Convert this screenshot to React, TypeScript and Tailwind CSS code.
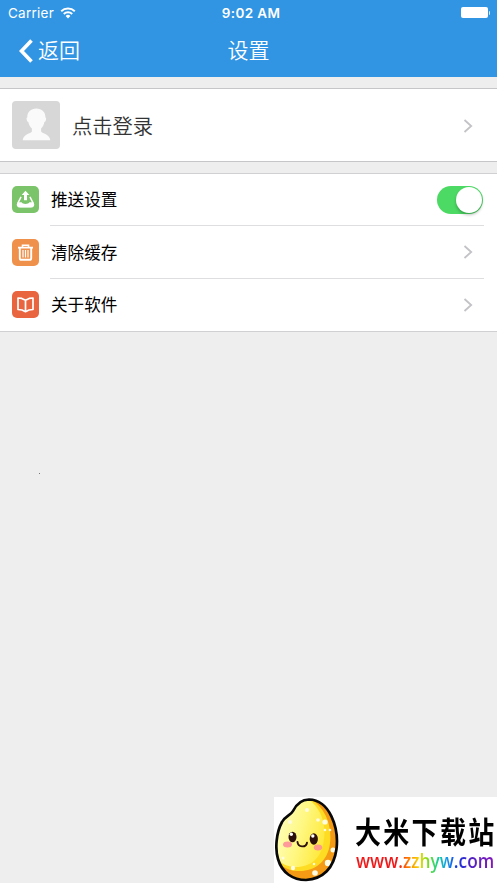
import { useState } from "react";

function WifiIcon() {
  return (
    <svg viewBox="0 0 16 12" className="mb-px ml-1.5 h-3 w-4" fill="none" stroke="white" strokeWidth="1.9">
      <path d="M1.2 4.2a9.8 9.8 0 0 1 13.6 0" />
      <path d="M3.8 7a6 6 0 0 1 8.4 0" />
      <path d="M8 11.4 5.6 9a3.4 3.4 0 0 1 4.8 0z" fill="white" stroke="none" />
    </svg>
  );
}

function Chevron() {
  return (
    <svg viewBox="0 0 10 14" className="mr-6 h-3.5 w-2.5" fill="none" stroke="#c3c3c7" strokeWidth="1.8">
      <path d="m1.5 1 6.7 6-6.7 6" />
    </svg>
  );
}

function PushIcon() {
  return (
    <svg viewBox="0 0 27 27" className="size-[27px] rounded-[5px] bg-[#7cc46a]">
      <path d="M13.5 4.8 9.7 9H12v5.200h3V9h2.300z" fill="white" />
      <path
        d="M8.800 11.300 6 16.800c-1.200 2.300-.2 4 1.800 4h11.400c2 0 3-1.700 1.800-4l-2.800-5.500"
        fill="none"
        stroke="white"
        strokeWidth="1.500"
        strokeLinecap="round"
      />
      <path d="M5.800 16.300h3.800c.8 2.200 7 2.200 7.800 0h3.800c1 2.500.1 4.900-2.200 4.900H8c-2.300 0-3.200-2.400-2.200-4.900z" fill="white" />
    </svg>
  );
}

function TrashIcon() {
  return (
    <svg viewBox="0 0 27 27" className="size-[27px] rounded-[5px] bg-[#f0914b]" fill="none" stroke="white">
      <path d="M6 8.600h15" strokeWidth="1.800" />
      <path d="M10.500 8.200V6.300h6v1.900" strokeWidth="1.600" />
      <path d="M7.800 9v10.200c0 1 .6 1.600 1.600 1.600h8.200c1 0 1.600-.6 1.600-1.600V9" strokeWidth="1.900" />
      <path d="M11 11v7.500M13.500 11v7.500M16 11v7.500" strokeWidth="1.200" />
    </svg>
  );
}

function BookIcon() {
  return (
    <svg
      viewBox="0 0 27 27"
      className="size-[27px] rounded-[5px] bg-[#e96540]"
      fill="none"
      stroke="white"
      strokeWidth="1.700"
      strokeLinejoin="round"
    >
      <path d="M13.500 9.300 9.800 7.400 6 7v11.500l4 .5 3.500 1.700L17 19l4-.5V7l-3.800.4-3.700 1.900V20" />
    </svg>
  );
}

function Avatar() {
  return (
    <svg viewBox="0 0 48 48" className="ml-3 size-12 rounded-sm bg-[#d7d7d7]">
      <path
        d="M24.300 7.500c-5.500 0-9.200 3.600-9 9-.9.200-.9 1-.5 2.500.3 1.200.8 1.900 1.500 2 .6 3 1.900 5 3.600 6.400v3.200c-1.300 2.200-8.300 2.500-9.200 8.600h27.600c-.9-6.100-7.900-6.400-9.200-8.600v-3.200c1.600-1.400 2.800-3.400 3.300-6.400.8-.1 1.200-.8 1.500-2 .4-1.500.3-2.300-.5-2.500.2-5.400-3.600-9-9.100-9z"
        fill="#fafafa"
      />
    </svg>
  );
}

function RiceMascot() {
  return (
    <svg viewBox="0 0 64 86" className="h-[86px] w-16 shrink-0">
      <defs>
        <linearGradient id="grain" x1="0" y1="0.300" x2="1" y2="0.700">
          <stop offset="0" stopColor="#ffffc4" />
          <stop offset="0.500" stopColor="#fff884" />
          <stop offset="1" stopColor="#ffe838" />
        </linearGradient>
        <clipPath id="grain-shape">
          <path d="M34 2.500C26 2.500 21 8 18 14c-2 4-8 5-11 11C1 36 0 52 3 62c4 14 15 21 28 21 17-1 28-12 30.500-31C64 31 55 3 34 2.500z" />
        </clipPath>
      </defs>
      <g clipPath="url(#grain-shape)">
        <path d="M0 0h64v86H0z" fill="#f59a14" />
        <path d="M36 2C51 12 57 29 55 46c-2 19-16 29-33 28C12 73 6 69 0 62V0z" fill="#ffdc24" />
        <path d="M33 2c13 9 18 24 16 40-2 19-13 28-28 28C11 70 5 66 0 59V0z" fill="url(#grain)" />
        <g fill="#fffbe3">
          <circle cx="50" cy="25" r="2.600" />
          <circle cx="43" cy="23" r="1.800" />
          <circle cx="50" cy="33" r="1.300" />
          <circle cx="55" cy="33" r="1.300" />
          <circle cx="58" cy="53" r="2.500" />
          <circle cx="53" cy="66" r="3.200" />
          <circle cx="40" cy="76" r="2.800" />
          <circle cx="18" cy="71" r="2.200" />
          <circle cx="8" cy="61" r="1.500" />
          <circle cx="39" cy="67" r="1.200" />
          <circle cx="15" cy="25" r="2" />
          <circle cx="32" cy="13" r="2" />
        </g>
      </g>
      <path
        d="M34 2.500C26 2.500 21 8 18 14c-2 4-8 5-11 11C1 36 0 52 3 62c4 14 15 21 28 21 17-1 28-12 30.500-31C64 31 55 3 34 2.500z"
        fill="none"
        stroke="#080808"
        strokeWidth="2.700"
      />
      <ellipse cx="12.500" cy="47.500" rx="4.500" ry="2.900" fill="#ff9a9b" />
      <ellipse cx="43" cy="50.500" rx="4.200" ry="2.900" fill="#ff9a8b" />
      <ellipse cx="17.500" cy="40" rx="4" ry="5.300" fill="#2b100c" />
      <ellipse cx="38.800" cy="42" rx="4.100" ry="5.700" fill="#2b100c" />
      <circle cx="16.300" cy="37.300" r="1.700" fill="white" />
      <circle cx="37.800" cy="39" r="1.700" fill="white" />
      <path d="M22.500 45c.5 5.500 8.500 6 9.500.7" fill="none" stroke="#2b100c" strokeWidth="1.900" strokeLinecap="round" />
    </svg>
  );
}

export default function App() {
  const [push, setPush] = useState(true);

  return (
    <div className="relative flex h-[883px] w-[497px] flex-col overflow-hidden bg-[#eee] font-['Inter','Noto_Sans_CJK_SC',sans-serif]">
      <header className="h-[77px] bg-[#3195e3] text-white">
        <div className="grid h-[25px] grid-cols-3 items-center pr-[7px] pl-2 text-[13.500px]">
          <div className="flex items-center pt-px tracking-[0.250px]">
            Carrier
            <WifiIcon />
          </div>
          <div className="pt-px pl-1 text-center text-[13.500px] font-semibold tracking-[0.350px]">9:02 AM</div>
          <div className="flex items-center justify-end">
            <span className="h-[11px] w-[27px] rounded-[2px] bg-white" />
            <span className="ml-px h-1 w-[1.500px] rounded-r-sm bg-white/80" />
          </div>
        </div>
        <div className="grid h-[51px] grid-cols-3 items-center font-[350]">
          <button className="flex items-center pl-[19px] text-[21px]">
            <svg viewBox="0 0 14 24" className="mr-[5px] h-6 w-3.5" fill="none" stroke="white" strokeWidth="3.600">
              <path d="M12.500 1.500 2.500 12l10 10.500" />
            </svg>
            <span className="pt-px">返回</span>
          </button>
          <h1 className="pt-px text-center text-[21px]">设置</h1>
        </div>
      </header>

      <main>
        <section className="mt-[11px] flex h-[74px] items-center border-y border-[#c6c6c8] bg-white">
          <Avatar />
          <div className="flex flex-1 items-center pt-0.5 pl-3">
            <span className="flex-1 pt-0.5 text-[20.300px] font-[350] text-[#333]">点击登录</span>
            <Chevron />
          </div>
        </section>

        <section className="mt-[11px] h-[159px] border-y border-[#d0d0d2] bg-white pl-3 text-[16.600px] text-black">
          <div className="flex h-[51px] items-center">
            <PushIcon />
            <span className="ml-3 flex-1 pt-0.5">推送设置</span>
            <button
              role="switch"
              aria-checked={push}
              onClick={() => setPush(!push)}
              className={`mr-3.5 flex h-7 w-[46px] items-center rounded-full px-px ${push ? "justify-end bg-[#4cd964]" : "justify-start bg-gray-200"}`}
            >
              <span className="size-[26px] rounded-full bg-white shadow-[0_2px_3px_rgba(0,0,0,0.250)]" />
            </button>
          </div>
          <div className="mr-[13px] ml-[38px] h-px bg-[#dedee0]" />
          <div className="flex h-[52px] items-center">
            <TrashIcon />
            <span className="ml-3 flex-1 pt-0.5">清除缓存</span>
            <Chevron />
          </div>
          <div className="mr-[13px] ml-[38px] h-px bg-[#dedee0]" />
          <div className="flex h-[51px] items-center">
            <BookIcon />
            <span className="ml-3 flex-1 pt-0.5">关于软件</span>
            <Chevron />
          </div>
        </section>
      </main>

      <span className="absolute top-[473px] left-[39px] size-px bg-[#777]" />

      <aside className="absolute right-0 bottom-0 flex h-[86px] w-[223px] bg-white pl-px">
        <RiceMascot />
        <div className="ml-[16px] pt-5 whitespace-nowrap">
          <div className="origin-center scale-y-115 font-['Noto_Sans_CJK_SC',sans-serif] text-[26px] leading-[26px] font-bold tracking-[2.300px] text-black">
            大米下载站
          </div>
          <div className="mt-[7px] ml-px w-[140px] origin-center scale-y-115 bg-[linear-gradient(90deg,#f01818_0%,#f01818_30%,#ff7800_37%,#f5d800_45%,#70df20_52%,#10cda0_59%,#1598ee_65%,#1438df_72%,#5220c0_82%,#8a18bb_100%)] bg-clip-text font-['Open_Sans',sans-serif] text-[17.300px] leading-[22px] font-semibold text-transparent">
            www.zzhyw.com
          </div>
        </div>
      </aside>
    </div>
  );
}
